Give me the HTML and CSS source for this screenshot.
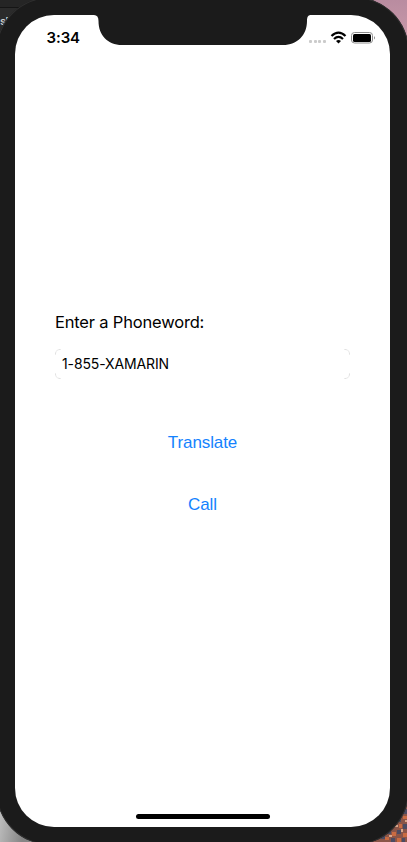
FILE: index.html
```html
<!DOCTYPE html>
<html lang="en">
<head>
<meta charset="utf-8">
<title>Phoneword</title>
<link rel="stylesheet" href="styles.css">
</head>
<body>
<div class="desktop">
  <span class="desktop-text">s!</span>
  <svg class="desktop-art" width="40" height="42" viewBox="0 0 40 42" shape-rendering="crispEdges">
    <rect width="40" height="42" fill="#8a5548"/>
    <path fill="#c96b42" d="M37 2h3v4h-3zM33 8h4v3h-4zM28 14h3v4h-3zM36 16h4v3h-4zM22 23h4v3h-4zM32 24h3v4h-3zM15 29h4v3h-4zM25 32h4v4h-4zM36 33h4v4h-4zM8 36h4v3h-4zM18 37h4v3h-4zM30 38h4v4h-4z"/>
    <path fill="#4b4b62" d="M36 9h4v5h-4zM30 18h4v4h-4zM25 20h3v4h-3zM36 24h4v5h-4zM20 29h4v5h-4zM30 30h4v4h-4zM14 35h4v4h-4zM24 38h4v4h-4zM35 38h3v4h-3z"/>
    <path fill="#d8a78c" d="M34 13h2v3h-2zM28 25h3v2h-3zM34 29h2v3h-2zM22 35h3v2h-3zM38 20h2v2h-2z"/>
  </svg>
  <main class="device">
    <div class="screen">
      <header class="status">
        <time class="clock">3:34</time>
        <svg class="notch" width="217" height="31" viewBox="0 0 217 31"><path fill="#1b1b1b" d="M0 0H217V1C214 1 213 3 213 7C213 21 203.500 31 189 31H28C13.500 31 4.500 21 4.500 7C4.500 3 3 1 0 1Z"/></svg>
        <svg class="indicators" width="68" height="14" viewBox="0 0 68 14">
          <g fill="#cbcbcb"><rect y="9" width="3" height="3" rx="1"/><rect x="5" y="9" width="3" height="3" rx="1"/><rect x="9" y="9" width="3" height="3" rx="1"/><rect x="14" y="9" width="3" height="3" rx="1"/></g>
          <g fill="none" stroke="#000" stroke-width="2.200"><path d="M22.500 5Q29.500-1.800 36.500 5M25 8Q29.500 3.800 34 8"/></g>
          <path d="M27 10Q29.500 8.200 32 10L29.500 12.500Z"/>
          <rect x="42.500" y="1.500" width="21" height="10.500" rx="3" fill="#fff" stroke="#8c8c8c"/>
          <rect x="44" y="3" width="18" height="8" rx="1.500"/>
          <path d="M65 5Q67 6.800 65 8.600Z" fill="#8c8c8c"/>
        </svg>
      </header>
      <section class="form">
        <label class="label" for="word">Enter a Phoneword:</label>
        <div class="field">
          <input class="input" id="word" value="1-855-XAMARIN">
          <svg class="corners" viewBox="0 0 295 30" fill="none" stroke="#d8d8d8"><path d="M.5 5.500Q.5.500 5.500.5M289.500.5Q294.500.5 294.500 5.500M294.500 24.500Q294.500 29.500 289.500 29.500M5.500 29.500Q.5 29.500.5 24.500" stroke-dasharray="2 1"/></svg>
        </div>
        <button class="action translate">Translate</button>
        <button class="action call">Call</button>
      </section>
      <div class="home"></div>
    </div>
  </main>
</div>
</body>
</html>
```
FILE: styles.css
```css
* { box-sizing: border-box; }
body { margin: 0; overflow: hidden; font-family: Inter, "Liberation Sans", sans-serif; }
.desktop {
  position: relative;
  width: 407px;
  height: 842px;
  overflow: hidden;
  display: flow-root;
  background:
    linear-gradient(#b98ca0, #d0a0ae) right top / 60px 60px no-repeat,
    linear-gradient(#252525 0 7px, #151515 7px 8px, #2b2b2b 8px) left top / 60px 60px no-repeat,
    linear-gradient(100deg, #cacaca, #858585 32px) left bottom / 60px 60px no-repeat,
    #1b1b1b;
}
.desktop-text { position: absolute; left: 0; top: 14px; font-size: 11px; font-weight: 600; line-height: 15px; letter-spacing: -.8px; color: #ccc; }
.desktop-art { position: absolute; right: 0; bottom: 0; }
.device {
  position: relative;
  width: 413px;
  height: 848px;
  margin: -3px 0 0 -4px;
  padding: 18px 19px;
  border-radius: 55px;
  background: #1b1b1b;
  box-shadow: inset 0 0 0 1px #303030;
}
.screen {
  display: flex;
  flex-direction: column;
  width: 375px;
  height: 812px;
  border-radius: 39px;
  background: #fff;
}
.status { display: flex; height: 44px; }
.clock { flex: none; width: 79px; padding: 14px 0 0 31.500px; font-size: 15px; line-height: 18px; font-weight: 600; letter-spacing: -.1px; white-space: nowrap; }
.notch { flex: none; margin-top: -1px; }
.indicators { flex: none; margin: 16px 0 0 -2px; }
.form { display: flex; flex-direction: column; padding: 0 40px; margin-top: 252px; }
.label { font-size: 16.500px; line-height: 22px; letter-spacing: -.18px; }
.field { position: relative; height: 30px; margin-top: 16px; }
.input { display: block; width: 100%; height: 29px; border: 0; padding: 0 7px; outline: 0; background: transparent; font: 14px/29px Inter, sans-serif; letter-spacing: -.12px; color: #000; }
.corners { position: absolute; inset: 0; width: 295px; height: 30px; pointer-events: none; }
.action { align-self: center; height: 22px; padding: 0; border: 0; background: none; color: #1482fe; font: 17px/22px "Liberation Sans", sans-serif; letter-spacing: -.1px; }
.translate { margin-top: 53px; }
.call { margin-top: 40px; }
.home { width: 134px; height: 5px; margin: auto auto 8px; border-radius: 3px; background: #000; }
```
